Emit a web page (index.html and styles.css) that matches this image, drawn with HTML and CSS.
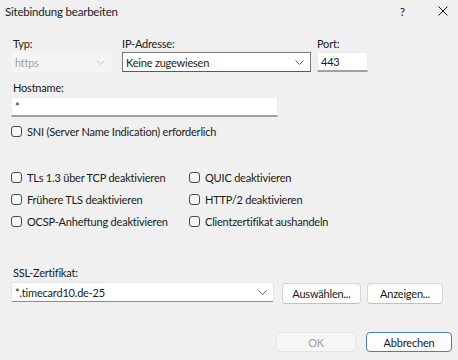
FILE: index.html
```html
<!DOCTYPE html>
<html lang="de">

<head>
  <meta charset="UTF-8">
  <meta name="viewport" content="width=device-width,initial-scale=1.0">
  <title>Sitebindung bearbeiten</title>
  <link rel="stylesheet" href="styles.css">
</head>

<body>
  <div class="dialog">
    <div class="titlebar">
      <span class="title">Sitebindung bearbeiten</span>
      <div class="title-buttons">
        <span class="help">?</span>
        <svg class="close" width="10" height="10" viewBox="0 0 10 10">
          <path d="M0.5 0.5 L9.5 9.5 M9.5 0.5 L0.5 9.5" stroke="#1a1a1a" stroke-width="1"/>
        </svg>
      </div>
    </div>

    <div class="content">
      <div class="top-row">
        <div class="field field-typ">
          <label>Typ:</label>
          <div class="select disabled">
            <span>https</span>
            <svg class="chevron" width="9" height="5" viewBox="0 0 9 5"><path d="M0.5 0.5 L4.5 4.5 L8.5 0.5" fill="none" stroke="#c4c4c4"/></svg>
          </div>
        </div>
        <div class="field field-ip">
          <label>IP-Adresse:</label>
          <div class="select focused">
            <span>Keine zugewiesen</span>
            <svg class="chevron" width="9" height="5" viewBox="0 0 9 5"><path d="M0.5 0.5 L4.5 4.5 L8.5 0.5" fill="none" stroke="#606060"/></svg>
          </div>
        </div>
        <div class="field field-port">
          <label>Port:</label>
          <div class="textbox">443</div>
        </div>
      </div>

      <div class="field field-host">
        <label>Hostname:</label>
        <div class="textbox">*</div>
      </div>

      <div class="check sni"><span class="box"></span>SNI (Server Name Indication) erforderlich</div>

      <div class="options">
        <div class="check"><span class="box"></span>TLs 1.3 über TCP deaktivieren</div>
        <div class="check"><span class="box"></span>QUIC deaktivieren</div>
        <div class="check"><span class="box"></span>Frühere TLS deaktivieren</div>
        <div class="check"><span class="box"></span>HTTP/2 deaktivieren</div>
        <div class="check"><span class="box"></span>OCSP-Anheftung deaktivieren</div>
        <div class="check"><span class="box"></span>Clientzertifikat aushandeln</div>
      </div>

      <div class="field field-ssl">
        <label>SSL-Zertifikat:</label>
        <div class="ssl-row">
          <div class="select">
            <span>*.timecard10.de-25</span>
            <svg class="chevron" width="9" height="5" viewBox="0 0 9 5"><path d="M0.5 0.5 L4.5 4.5 L8.5 0.5" fill="none" stroke="#606060"/></svg>
          </div>
          <button class="btn btn-select">Auswählen...</button>
          <button class="btn btn-show">Anzeigen...</button>
        </div>
      </div>

      <div class="footer">
        <button class="btn btn-ok" disabled>OK</button>
        <button class="btn btn-cancel">Abbrechen</button>
      </div>
    </div>
  </div>
</body>

</html>
```

FILE: styles.css
```css
html,
body {
  margin: 0;
  padding: 0;
  width: 458px;
  height: 360px;
  overflow: hidden;
}

body {
  font-family: Lato, "Noto Sans", sans-serif;
  font-size: 11px;
  letter-spacing: -0.2px;
  color: #1a1a1a;
  background: #f0f0f0;
}

.titlebar {
  height: 22px;
  display: flex;
  align-items: center;
  justify-content: space-between;
  padding: 0 0 0 5px;
}

.title {
  font-size: 11.5px;
}

.title-buttons {
  display: flex;
  align-items: center;
}

.help {
  font-size: 12px;
  margin-right: 33px;
}

.close {
  margin-right: 10px;
}

.content {
  padding: 0 11px;
}

label {
  display: block;
  line-height: 16px;
  padding-left: 2px;
}

/* --- oberste Zeile --- */
.top-row {
  display: flex;
  margin-top: 14px;
}

.field-typ {
  width: 101px;
  margin-right: 10px;
}

.field-ip {
  width: 189px;
  margin-right: 6px;
}

.field-ip label,
.field-port label {
  padding-left: 0;
}

.field-port {
  width: 51px;
}

.select {
  height: 20px;
  box-sizing: border-box;
  display: flex;
  align-items: center;
  justify-content: space-between;
  padding: 0 4px 0 3px;
  background: #fff;
  border: 1px solid #e3e3e3;
  border-bottom-color: #8a8a8a;
  border-radius: 2px;
}

.select.disabled {
  background: #f5f5f5;
  border-color: #f5f5f5;
  color: #a0a0a0;
}

.select.focused {
  border-color: #7a7a7a;
  border-bottom-color: #5a5a5a;
  border-radius: 0;
}

.chevron {
  margin-right: 2px;
}

.textbox {
  height: 20px;
  box-sizing: border-box;
  padding: 0 3px;
  line-height: 18px;
  background: #fff;
  border: 1px solid #ececec;
  border-bottom: 2px solid #a0a0a0;
}

/* --- Hostname --- */
.field-host {
  margin-top: 8px;
  width: 267px;
}

.field-host .textbox {
  margin-top: 1px;
}

/* --- Checkboxen --- */
.check {
  display: flex;
  align-items: center;
  height: 22px;
  white-space: nowrap;
}

.box {
  width: 11px;
  height: 11px;
  box-sizing: border-box;
  border: 1px solid #4a4a4a;
  border-radius: 3px;
  background: #f7f7f7;
  margin-right: 5px;
  flex-shrink: 0;
}

.sni {
  margin-top: 3px;
}

.options {
  display: grid;
  grid-template-columns: 178px 1fr;
  margin-top: 24px;
}

/* --- SSL-Zertifikat --- */
.field-ssl {
  margin-top: 33px;
}

.ssl-row {
  display: flex;
  align-items: flex-start;
  margin-top: 1px;
}

.ssl-row .select {
  width: 263px;
  margin-right: 8px;
}

.btn {
  font-family: inherit;
  font-size: 11px;
  letter-spacing: -0.2px;
  color: #1a1a1a;
  height: 21px;
  padding: 0;
  background: #fdfdfd;
  border: 1px solid #d6d6d6;
  border-bottom-color: #c0c0c0;
  border-radius: 4px;
}

.btn-select {
  width: 79px;
  margin-top: 1px;
  margin-right: 6px;
}

.btn-show {
  width: 76px;
  margin-top: 1px;
}

.footer {
  display: flex;
  justify-content: flex-end;
  margin-top: 28px;
  margin-right: -5px;
}

.btn-ok {
  width: 80px;
  height: 20px;
  margin-right: 10px;
  background: #f6f6f6;
  color: #a0a0a0;
  border-color: #e5e5e5;
}

.btn-cancel {
  width: 86px;
  height: 20px;
  border-color: #4a7fb5;
}
```
